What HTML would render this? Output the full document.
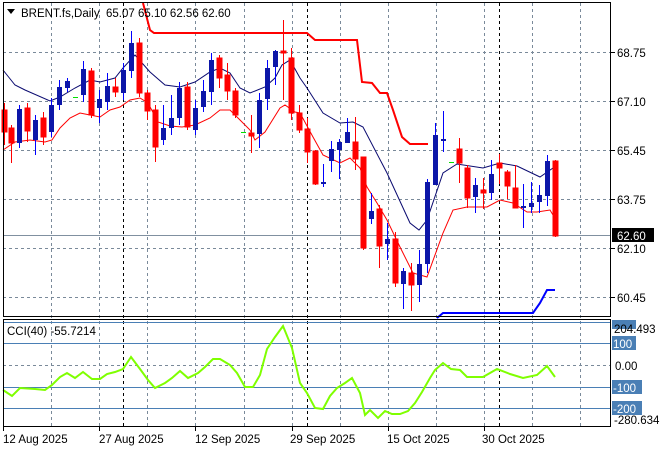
<!DOCTYPE html>
<html><head><meta charset="utf-8"><style>
body{margin:0;background:#fff;width:660px;height:450px;overflow:hidden}
svg{display:block}
text{font-family:"Liberation Sans",sans-serif;font-size:11.5px;fill:#000}
</style></head><body>
<svg width="660" height="450" xmlns="http://www.w3.org/2000/svg">
<rect width="660" height="450" fill="#fff"/>
<!-- grid main -->
<g stroke="#7a8a9a" stroke-dasharray="3,3" stroke-width="1">
<line x1="3" y1="52.5" x2="610" y2="52.5"/><line x1="3" y1="101.5" x2="610" y2="101.5"/><line x1="3" y1="150.5" x2="610" y2="150.5"/><line x1="3" y1="199.5" x2="610" y2="199.5"/><line x1="3" y1="248.5" x2="610" y2="248.5"/><line x1="3" y1="297.5" x2="610" y2="297.5"/>
<line x1="51.5" y1="3" x2="51.5" y2="426"/><line x1="99.5" y1="3" x2="99.5" y2="426"/><line x1="147.5" y1="3" x2="147.5" y2="426"/><line x1="195.5" y1="3" x2="195.5" y2="426"/><line x1="244.5" y1="3" x2="244.5" y2="426"/><line x1="292.5" y1="3" x2="292.5" y2="426"/><line x1="340.5" y1="3" x2="340.5" y2="426"/><line x1="388.5" y1="3" x2="388.5" y2="426"/><line x1="436.5" y1="3" x2="436.5" y2="426"/><line x1="484.5" y1="3" x2="484.5" y2="426"/><line x1="532.5" y1="3" x2="532.5" y2="426"/><line x1="580.5" y1="3" x2="580.5" y2="426"/>
<line x1="3" y1="365.5" x2="610" y2="365.5"/>
</g>
<g stroke="#000" stroke-dasharray="3,3"><line x1="123.5" y1="3" x2="123.5" y2="426"/><line x1="307.5" y1="3" x2="307.5" y2="426"/><line x1="499.5" y1="3" x2="499.5" y2="426"/></g>
<line x1="3" y1="235.5" x2="610" y2="235.5" stroke="#8090a0"/>
<!-- bands -->
<polyline fill="none" stroke="#0a0a70" stroke-width="1" points="3,70 15,85 25,90 50,101 60,97 75,88 90,80 100,82 115,78 123,68 135,55 150,72 165,85 180,87 195,82 210,72 220,68 230,73 240,88 250,93 265,87 275,78 282,65 290,60 300,78 307,88 323,113 340,123 353,122 363,127 387,173 410,223 419,230 427,220 443,173 457,164 483,168 500,163 517,166 540,177 553,168"/>
<polyline fill="none" stroke="#f00" stroke-width="1" points="3,150 15,142 30,140 45,142 52,140 60,128 70,118 80,113 90,115 100,117 110,110 120,107 130,100 140,98 148,103 158,122 170,126 182,127 195,125 210,118 220,110 230,110 240,120 250,130 255,140 265,132 280,108 285,105 295,112 300,113 313,137 323,155 340,163 350,158 360,168 367,187 377,203 387,220 400,247 413,273 427,277 443,233 453,210 467,207 487,207 500,200 513,203 527,212 537,212 550,210 553,215"/>
<polyline fill="none" stroke="#f00" stroke-width="2" points="143,3 150,30 154,33 307,33 315,40 357,40 362,82 372,83 380,93 387,93 393,110 402,137 410,144 428,144"/>
<polyline fill="none" stroke="#00f" stroke-width="2" points="437,318 443,313 533,313 540,303 547,290 555,290"/>
<!-- candles -->
<g stroke-width="1">
<g stroke="#f00" fill="#f00">
<line x1="4.5" y1="103" x2="4.5" y2="145"/><rect x="2" y="110" width="5" height="22"/>
<line x1="11.5" y1="125" x2="11.5" y2="163"/><rect x="9" y="128" width="5" height="15"/>
<line x1="27.5" y1="103" x2="27.5" y2="142"/><rect x="25" y="108" width="5" height="23"/>
<line x1="43.5" y1="112" x2="43.5" y2="145"/><rect x="41" y="118" width="5" height="19"/>
<line x1="91.5" y1="68" x2="91.5" y2="118"/><rect x="89" y="71" width="5" height="44"/>
<line x1="115.5" y1="78" x2="115.5" y2="97"/><rect x="113" y="87" width="5" height="5"/>
<line x1="139.5" y1="38" x2="139.5" y2="97"/><rect x="137" y="43" width="5" height="50"/>
<line x1="147.5" y1="90" x2="147.5" y2="120"/><rect x="145" y="93" width="5" height="18"/>
<line x1="155.5" y1="105" x2="155.5" y2="162"/><rect x="153" y="110" width="5" height="37"/>
<line x1="187.5" y1="82" x2="187.5" y2="130"/><rect x="185" y="87" width="5" height="40"/>
<line x1="219.5" y1="55" x2="219.5" y2="88"/><rect x="217" y="58" width="5" height="20"/>
<line x1="227.5" y1="63" x2="227.5" y2="100"/><rect x="225" y="75" width="5" height="16"/>
<line x1="235.5" y1="88" x2="235.5" y2="118"/><rect x="233" y="91" width="5" height="24"/>
<line x1="251.5" y1="115" x2="251.5" y2="153"/><rect x="249" y="133" width="5" height="3"/>
<line x1="283.5" y1="20" x2="283.5" y2="100"/><rect x="281" y="51" width="5" height="2"/>
<line x1="291.5" y1="48" x2="291.5" y2="120"/><rect x="289" y="58" width="5" height="55"/>
<line x1="299.5" y1="105" x2="299.5" y2="133"/><rect x="297" y="113" width="5" height="17"/>
<line x1="307.5" y1="118" x2="307.5" y2="163"/><rect x="305" y="129" width="5" height="23"/>
<line x1="315.5" y1="150" x2="315.5" y2="185"/><rect x="313" y="151" width="5" height="33"/>
<line x1="355.5" y1="117" x2="355.5" y2="170"/><rect x="353" y="142" width="5" height="17"/>
<line x1="363.5" y1="157" x2="363.5" y2="250"/><rect x="361" y="157" width="5" height="91"/>
<line x1="379.5" y1="205" x2="379.5" y2="268"/><rect x="377" y="209" width="5" height="37"/>
<line x1="395.5" y1="232" x2="395.5" y2="287"/><rect x="393" y="239" width="5" height="44"/>
<line x1="411.5" y1="263" x2="411.5" y2="311"/><rect x="409" y="273" width="5" height="12"/>
<line x1="459.5" y1="138" x2="459.5" y2="183"/><rect x="457" y="149" width="5" height="14"/>
<line x1="467.5" y1="165" x2="467.5" y2="208"/><rect x="465" y="168" width="5" height="30"/>
<line x1="483.5" y1="178" x2="483.5" y2="209"/><rect x="481" y="190" width="5" height="3"/>
<line x1="499.5" y1="154" x2="499.5" y2="184"/><rect x="497" y="163" width="5" height="5"/>
<line x1="507.5" y1="170" x2="507.5" y2="199"/><rect x="505" y="172" width="5" height="14"/>
<line x1="515.5" y1="165" x2="515.5" y2="208"/><rect x="513" y="188" width="5" height="20"/>
<line x1="555.5" y1="160" x2="555.5" y2="237"/><rect x="553" y="161" width="5" height="75"/>
</g>
<g stroke="#0000ff"><line x1="19.5" y1="105" x2="19.5" y2="148"/><line x1="35.5" y1="115" x2="35.5" y2="155"/><line x1="51.5" y1="98" x2="51.5" y2="137"/><line x1="59.5" y1="80" x2="59.5" y2="110"/><line x1="67.5" y1="78" x2="67.5" y2="92"/><line x1="83.5" y1="61" x2="83.5" y2="102"/><line x1="99.5" y1="90" x2="99.5" y2="123"/><line x1="107.5" y1="73" x2="107.5" y2="110"/><line x1="123.5" y1="63" x2="123.5" y2="100"/><line x1="131.5" y1="31" x2="131.5" y2="78"/><line x1="163.5" y1="105" x2="163.5" y2="145"/><line x1="171.5" y1="95" x2="171.5" y2="135"/><line x1="179.5" y1="82" x2="179.5" y2="125"/><line x1="195.5" y1="100" x2="195.5" y2="135"/><line x1="203.5" y1="80" x2="203.5" y2="112"/><line x1="211.5" y1="53" x2="211.5" y2="105"/><line x1="259.5" y1="93" x2="259.5" y2="148"/><line x1="267.5" y1="60" x2="267.5" y2="110"/><line x1="275.5" y1="50" x2="275.5" y2="85"/><line x1="323.5" y1="164" x2="323.5" y2="187"/><line x1="331.5" y1="141" x2="331.5" y2="172"/><line x1="339.5" y1="139" x2="339.5" y2="179"/><line x1="347.5" y1="118" x2="347.5" y2="143"/><line x1="371.5" y1="193" x2="371.5" y2="224"/><line x1="387.5" y1="223" x2="387.5" y2="260"/><line x1="403.5" y1="268" x2="403.5" y2="309"/><line x1="419.5" y1="250" x2="419.5" y2="302"/><line x1="427.5" y1="179" x2="427.5" y2="273"/><line x1="435.5" y1="123" x2="435.5" y2="185"/><line x1="443.5" y1="111" x2="443.5" y2="152"/><line x1="475.5" y1="178" x2="475.5" y2="213"/><line x1="491.5" y1="160" x2="491.5" y2="200"/><line x1="523.5" y1="184" x2="523.5" y2="228"/><line x1="531.5" y1="182" x2="531.5" y2="213"/><line x1="539.5" y1="185" x2="539.5" y2="213"/><line x1="547.5" y1="155" x2="547.5" y2="206"/></g>
<g fill="#0c16a8"><rect x="17" y="109" width="5" height="34"/><rect x="33" y="120" width="5" height="20"/><rect x="49" y="105" width="5" height="27"/><rect x="57" y="87" width="5" height="18"/><rect x="65" y="81" width="5" height="7"/><rect x="81" y="69" width="5" height="26"/><rect x="97" y="99" width="5" height="9"/><rect x="105" y="86" width="5" height="16"/><rect x="121" y="70" width="5" height="23"/><rect x="129" y="43" width="5" height="28"/><rect x="161" y="128" width="5" height="12"/><rect x="169" y="118" width="5" height="10"/><rect x="177" y="88" width="5" height="30"/><rect x="193" y="108" width="5" height="22"/><rect x="201" y="91" width="5" height="16"/><rect x="209" y="60" width="5" height="32"/><rect x="257" y="100" width="5" height="34"/><rect x="265" y="68" width="5" height="31"/><rect x="273" y="51" width="5" height="16"/><rect x="321" y="182" width="5" height="2"/><rect x="329" y="149" width="5" height="12"/><rect x="337" y="142" width="5" height="8"/><rect x="345" y="132" width="5" height="11"/><rect x="369" y="211" width="5" height="8"/><rect x="385" y="239" width="5" height="5"/><rect x="401" y="271" width="5" height="13"/><rect x="417" y="264" width="5" height="21"/><rect x="425" y="182" width="5" height="82"/><rect x="433" y="135" width="5" height="50"/><rect x="441" y="139" width="5" height="2"/><rect x="473" y="185" width="5" height="12"/><rect x="489" y="174" width="5" height="19"/><rect x="521" y="206" width="5" height="2"/><rect x="529" y="203" width="5" height="4"/><rect x="537" y="195" width="5" height="7"/><rect x="545" y="161" width="5" height="35"/></g>
<g stroke="#00e000"><line x1="73" y1="97.5" x2="78" y2="97.5"/><line x1="241" y1="132.5" x2="246" y2="132.5"/><line x1="449" y1="162.5" x2="454" y2="162.5"/></g>
</g>
<!-- CCI pane -->
<g stroke="#4a7fb5"><line x1="3" y1="322.5" x2="610" y2="322.5"/><line x1="3" y1="343.5" x2="610" y2="343.5"/><line x1="3" y1="387.5" x2="610" y2="387.5"/><line x1="3" y1="408.5" x2="610" y2="408.5"/></g>
<polyline fill="none" stroke="#7fff00" stroke-width="2" points="3,390 12,396 20,388 35,389 45,390 52,385 60,377 67,373 75,378 83,372 92,379 100,379 107,374 115,372 123,369 131,357 140,369 148,380 155,388 165,383 172,378 180,371 188,378 198,373 205,367 213,359 220,359 230,365 237,373 245,387 253,387 260,375 267,349 275,337 283,326 292,348 300,383 307,393 315,408 323,409 330,396 337,388 345,383 352,378 360,393 365,415 370,410 378,418 385,411 392,414 400,414 408,411 415,403 422,392 430,378 435,370 443,363 451,369 460,370 467,377 483,377 497,369 510,374 523,378 537,375 547,366 555,377"/>
<!-- frames -->
<g fill="none" stroke="#000"><rect x="3.5" y="2.5" width="607" height="314"/><rect x="3.5" y="319.5" width="607" height="107"/></g>
<!-- header -->
<path d="M7,9 L15,9 L11,14 Z" fill="#000"/>
<text x="21" y="17">BRENT.fs,Daily&#160; 65.07 65.10 62.56 62.60</text>
<text x="7" y="335">CCI(40) -55.7214</text>
<!-- price axis -->
<g stroke="#000"><line x1="611" y1="52.5" x2="615" y2="52.5"/><line x1="611" y1="101.5" x2="615" y2="101.5"/><line x1="611" y1="150.5" x2="615" y2="150.5"/><line x1="611" y1="199.5" x2="615" y2="199.5"/><line x1="611" y1="248.5" x2="615" y2="248.5"/><line x1="611" y1="297.5" x2="615" y2="297.5"/></g>
<text x="617" y="57">68.75</text><text x="617" y="106">67.10</text><text x="617" y="155">65.45</text><text x="617" y="204">63.75</text><text x="617" y="253">62.10</text><text x="617" y="302">60.45</text>
<rect x="612" y="228" width="42" height="14" fill="#000"/><text x="617" y="240" style="fill:#fff">62.60</text>
<rect x="612" y="320" width="24" height="9" fill="#4a7fb5"/>
<text x="614" y="333">204.493</text>
<rect x="612" y="336" width="24" height="14" fill="#4a7fb5"/><text x="613" y="348" style="fill:#fff">100</text>
<text x="615" y="370">0.00</text>
<rect x="612" y="380" width="30" height="14" fill="#4a7fb5"/><text x="613" y="392" style="fill:#fff">-100</text>
<rect x="612" y="401" width="30" height="14" fill="#4a7fb5"/><text x="613" y="413" style="fill:#fff">-200</text>
<text x="614" y="424">-280.634</text>
<!-- dates -->
<g stroke="#000"><line x1="3.5" y1="427" x2="3.5" y2="431"/><line x1="99.5" y1="427" x2="99.5" y2="431"/><line x1="195.5" y1="427" x2="195.5" y2="431"/><line x1="292.5" y1="427" x2="292.5" y2="431"/><line x1="388.5" y1="427" x2="388.5" y2="431"/><line x1="484.5" y1="427" x2="484.5" y2="431"/></g>
<text x="3" y="443">12 Aug 2025</text><text x="99" y="443">27 Aug 2025</text><text x="195" y="443">12 Sep 2025</text><text x="290" y="443">29 Sep 2025</text><text x="387" y="443">15 Oct 2025</text><text x="482" y="443">30 Oct 2025</text>
</svg>
</body></html>
